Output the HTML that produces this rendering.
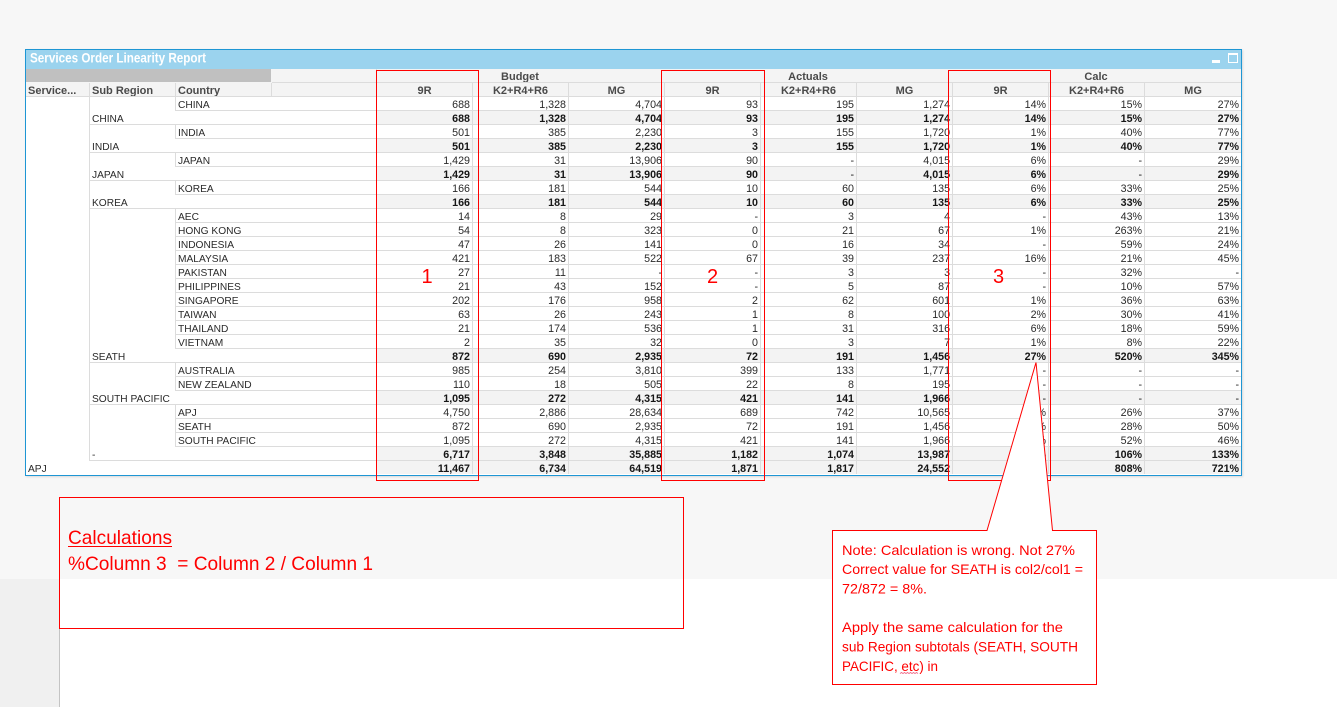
<!DOCTYPE html>
<html><head><meta charset="utf-8"><title>Services Order Linearity Report</title>
<style>
html,body{margin:0;padding:0;width:1337px;height:707px;overflow:hidden;background:#fff}
#bg1{position:absolute;left:0;top:0;width:1337px;height:579px;background:#f7f7f7}
#bg2{position:absolute;left:0;top:579px;width:59px;height:128px;background:#f0f0f0;border-right:1px solid #c4c4c4}
#panel{position:absolute;left:25px;top:49px;width:1217px;height:427px;box-sizing:border-box;border:1px solid #1e96d4;background:#fff;box-shadow:1px 1px 2px rgba(0,0,0,.12);overflow:hidden}
#title{position:absolute;left:0;top:0;width:1215px;height:19px;background:#9bd3ee}
table{position:absolute;left:0;top:19px;border-collapse:separate;border-spacing:0;table-layout:fixed;width:1215px;font-family:"Liberation Sans",Arial,sans-serif;font-size:10.7px;color:#2a2a2a}
td{height:9px;line-height:9px;padding:4px 2px 0 0;border-bottom:1px solid #dcdcdc;border-right:1px solid #dcdcdc;white-space:nowrap;overflow:hidden;text-align:right;box-sizing:content-box}
td:last-child{border-right:0}
td.l{text-align:left;padding:4px 0 0 2px;font-size:10.2px}
td.e{border-bottom:0}
td.svc{border-bottom:0}
tr.t td{font-weight:bold;background:#f3f3f3;color:#161616}
tr.t td.l{font-weight:normal;background:#fff;color:#2a2a2a}
tr.h td{background:#f4f4f4;font-weight:bold;font-size:11px;color:#4a4a4a;text-align:center}
tr.h+tr.h td{padding-right:0}
tr.h td.gray{background:#c0c0c0;border-bottom:1px solid #f4f4f4;border-right:1px solid #f4f4f4}
tr.h td.hl{text-align:left;padding:4px 0 0 2px}
tr.h td.nb{border-right:0}
tr.last td{border-bottom:0}
svg#ov{position:absolute;left:0;top:0;width:1337px;height:707px}
</style></head>
<body>
<div id="bg1"></div><div id="bg2"></div>
<div id="panel">
<div id="title">
<svg width="1215" height="19" style="position:absolute;left:0;top:0">
<text x="4" y="12.5" font-family="Liberation Sans,Arial,sans-serif" font-size="14" font-weight="bold" fill="#fff" textLength="176" lengthAdjust="spacingAndGlyphs">Services Order Linearity Report</text>
<rect x="1186" y="10" width="8" height="3" fill="#fff"/>
<rect x="1202.5" y="3.5" width="9" height="9" fill="none" stroke="#fff"/>
<rect x="1202" y="3" width="10" height="2" fill="#fff"/>
</svg>
</div>
<table>
<colgroup><col style="width:64px"><col style="width:86px"><col style="width:96px"><col style="width:105px"><col style="width:96px"><col style="width:96px"><col style="width:96px"><col style="width:96px"><col style="width:96px"><col style="width:96px"><col style="width:96px"><col style="width:96px"><col style="width:96px"></colgroup>
<tr class="h"><td colspan="3" class="gray"></td><td></td><td colspan="3" class="nb">Budget</td><td colspan="3" class="nb">Actuals</td><td colspan="3">Calc</td></tr>
<tr class="h"><td class="hl">Service...</td><td class="hl">Sub Region</td><td class="hl">Country</td><td></td><td>9R</td><td>K2+R4+R6</td><td>MG</td><td>9R</td><td>K2+R4+R6</td><td>MG</td><td>9R</td><td>K2+R4+R6</td><td>MG</td></tr>
<tr><td class="svc" rowspan="26"></td><td class="e"></td><td class="l" colspan="2">CHINA</td><td>688</td><td>1,328</td><td>4,704</td><td>93</td><td>195</td><td>1,274</td><td>14%</td><td>15%</td><td>27%</td></tr>
<tr class="t"><td class="l" colspan="3">CHINA</td><td>688</td><td>1,328</td><td>4,704</td><td>93</td><td>195</td><td>1,274</td><td>14%</td><td>15%</td><td>27%</td></tr>
<tr><td class="e"></td><td class="l" colspan="2">INDIA</td><td>501</td><td>385</td><td>2,230</td><td>3</td><td>155</td><td>1,720</td><td>1%</td><td>40%</td><td>77%</td></tr>
<tr class="t"><td class="l" colspan="3">INDIA</td><td>501</td><td>385</td><td>2,230</td><td>3</td><td>155</td><td>1,720</td><td>1%</td><td>40%</td><td>77%</td></tr>
<tr><td class="e"></td><td class="l" colspan="2">JAPAN</td><td>1,429</td><td>31</td><td>13,906</td><td>90</td><td>-</td><td>4,015</td><td>6%</td><td>-</td><td>29%</td></tr>
<tr class="t"><td class="l" colspan="3">JAPAN</td><td>1,429</td><td>31</td><td>13,906</td><td>90</td><td style="font-weight:normal">-</td><td>4,015</td><td>6%</td><td style="font-weight:normal">-</td><td>29%</td></tr>
<tr><td class="e"></td><td class="l" colspan="2">KOREA</td><td>166</td><td>181</td><td>544</td><td>10</td><td>60</td><td>135</td><td>6%</td><td>33%</td><td>25%</td></tr>
<tr class="t"><td class="l" colspan="3">KOREA</td><td>166</td><td>181</td><td>544</td><td>10</td><td>60</td><td>135</td><td>6%</td><td>33%</td><td>25%</td></tr>
<tr><td class="e"></td><td class="l" colspan="2">AEC</td><td>14</td><td>8</td><td>29</td><td>-</td><td>3</td><td>4</td><td>-</td><td>43%</td><td>13%</td></tr>
<tr><td class="e"></td><td class="l" colspan="2">HONG KONG</td><td>54</td><td>8</td><td>323</td><td>0</td><td>21</td><td>67</td><td>1%</td><td>263%</td><td>21%</td></tr>
<tr><td class="e"></td><td class="l" colspan="2">INDONESIA</td><td>47</td><td>26</td><td>141</td><td>0</td><td>16</td><td>34</td><td>-</td><td>59%</td><td>24%</td></tr>
<tr><td class="e"></td><td class="l" colspan="2">MALAYSIA</td><td>421</td><td>183</td><td>522</td><td>67</td><td>39</td><td>237</td><td>16%</td><td>21%</td><td>45%</td></tr>
<tr><td class="e"></td><td class="l" colspan="2">PAKISTAN</td><td>27</td><td>11</td><td>-</td><td>-</td><td>3</td><td>3</td><td>-</td><td>32%</td><td>-</td></tr>
<tr><td class="e"></td><td class="l" colspan="2">PHILIPPINES</td><td>21</td><td>43</td><td>152</td><td>-</td><td>5</td><td>87</td><td>-</td><td>10%</td><td>57%</td></tr>
<tr><td class="e"></td><td class="l" colspan="2">SINGAPORE</td><td>202</td><td>176</td><td>958</td><td>2</td><td>62</td><td>601</td><td>1%</td><td>36%</td><td>63%</td></tr>
<tr><td class="e"></td><td class="l" colspan="2">TAIWAN</td><td>63</td><td>26</td><td>243</td><td>1</td><td>8</td><td>100</td><td>2%</td><td>30%</td><td>41%</td></tr>
<tr><td class="e"></td><td class="l" colspan="2">THAILAND</td><td>21</td><td>174</td><td>536</td><td>1</td><td>31</td><td>316</td><td>6%</td><td>18%</td><td>59%</td></tr>
<tr><td class="e"></td><td class="l" colspan="2">VIETNAM</td><td>2</td><td>35</td><td>32</td><td>0</td><td>3</td><td>7</td><td>1%</td><td>8%</td><td>22%</td></tr>
<tr class="t"><td class="l" colspan="3">SEATH</td><td>872</td><td>690</td><td>2,935</td><td>72</td><td>191</td><td>1,456</td><td>27%</td><td>520%</td><td>345%</td></tr>
<tr><td class="e"></td><td class="l" colspan="2">AUSTRALIA</td><td>985</td><td>254</td><td>3,810</td><td>399</td><td>133</td><td>1,771</td><td>-</td><td>-</td><td>-</td></tr>
<tr><td class="e"></td><td class="l" colspan="2">NEW ZEALAND</td><td>110</td><td>18</td><td>505</td><td>22</td><td>8</td><td>195</td><td>-</td><td>-</td><td>-</td></tr>
<tr class="t"><td class="l" colspan="3">SOUTH PACIFIC</td><td>1,095</td><td>272</td><td>4,315</td><td>421</td><td>141</td><td>1,966</td><td style="font-weight:normal">-</td><td style="font-weight:normal">-</td><td style="font-weight:normal">-</td></tr>
<tr><td class="e"></td><td class="l" colspan="2">APJ</td><td>4,750</td><td>2,886</td><td>28,634</td><td>689</td><td>742</td><td>10,565</td><td>15%</td><td>26%</td><td>37%</td></tr>
<tr><td class="e"></td><td class="l" colspan="2">SEATH</td><td>872</td><td>690</td><td>2,935</td><td>72</td><td>191</td><td>1,456</td><td>8%</td><td>28%</td><td>50%</td></tr>
<tr><td class="e"></td><td class="l" colspan="2">SOUTH PACIFIC</td><td>1,095</td><td>272</td><td>4,315</td><td>421</td><td>141</td><td>1,966</td><td>38%</td><td>52%</td><td>46%</td></tr>
<tr class="t"><td class="l" colspan="3">-</td><td>6,717</td><td>3,848</td><td>35,885</td><td>1,182</td><td>1,074</td><td>13,987</td><td>18%</td><td>106%</td><td>133%</td></tr>
<tr class="t last"><td class="l" colspan="4" style="border-right:1px solid #dcdcdc">APJ</td><td>11,467</td><td>6,734</td><td>64,519</td><td>1,871</td><td>1,817</td><td>24,552</td><td>16%</td><td>808%</td><td>721%</td></tr>
</table>
</div>
<svg id="ov" viewBox="0 0 1337 707" font-family="Liberation Sans,Arial,sans-serif" fill="#f00">
<g fill="none" stroke="#f00" stroke-width="1">
<rect x="376.5" y="70.5" width="102" height="410"/>
<rect x="661.5" y="70.5" width="103" height="410"/>
<rect x="948.5" y="70.5" width="102" height="410"/>
<rect x="59.5" y="497.5" width="624" height="131"/>
<path d="M832.5 530.5H987L1036 362.5L1052.5 530.5H1096.5V684.5H832.5Z" fill="#fff"/>
</g>
<g font-size="20" text-anchor="middle">
<text x="427" y="283">1</text><text x="712.5" y="283">2</text><text x="998.5" y="283">3</text>
</g>
<text x="68" y="544" font-size="19.5" textLength="104" lengthAdjust="spacingAndGlyphs">Calculations</text>
<rect x="68" y="546" width="104" height="1"/>
<text x="68" y="570" font-size="19.5" textLength="305" lengthAdjust="spacingAndGlyphs" xml:space="preserve">%Column 3  = Column 2 / Column 1</text>
<g font-size="14">
<text x="842" y="555" textLength="233" lengthAdjust="spacingAndGlyphs">Note: Calculation is wrong. Not 27%</text>
<text x="842" y="574" textLength="241" lengthAdjust="spacingAndGlyphs">Correct value for SEATH is col2/col1 =</text>
<text x="842" y="593.5" textLength="85" lengthAdjust="spacingAndGlyphs">72/872 = 8%.</text>
<text x="842" y="632" textLength="221" lengthAdjust="spacingAndGlyphs">Apply the same calculation for the</text>
<text x="842" y="651.5" textLength="236" lengthAdjust="spacingAndGlyphs">sub Region subtotals (SEATH, SOUTH</text>
<text x="842" y="671" textLength="96" lengthAdjust="spacingAndGlyphs">PACIFIC, etc) in</text>
</g>
<path d="M900 673.5l1.5-1 1.5 1 1.5-1 1.5 1 1.5-1 1.5 1 1.5-1 1.5 1 1.5-1 1.5 1 1.5-1 1.5 1" fill="none" stroke="#ee6080" stroke-width=".8"/>
</svg>
</body></html>
